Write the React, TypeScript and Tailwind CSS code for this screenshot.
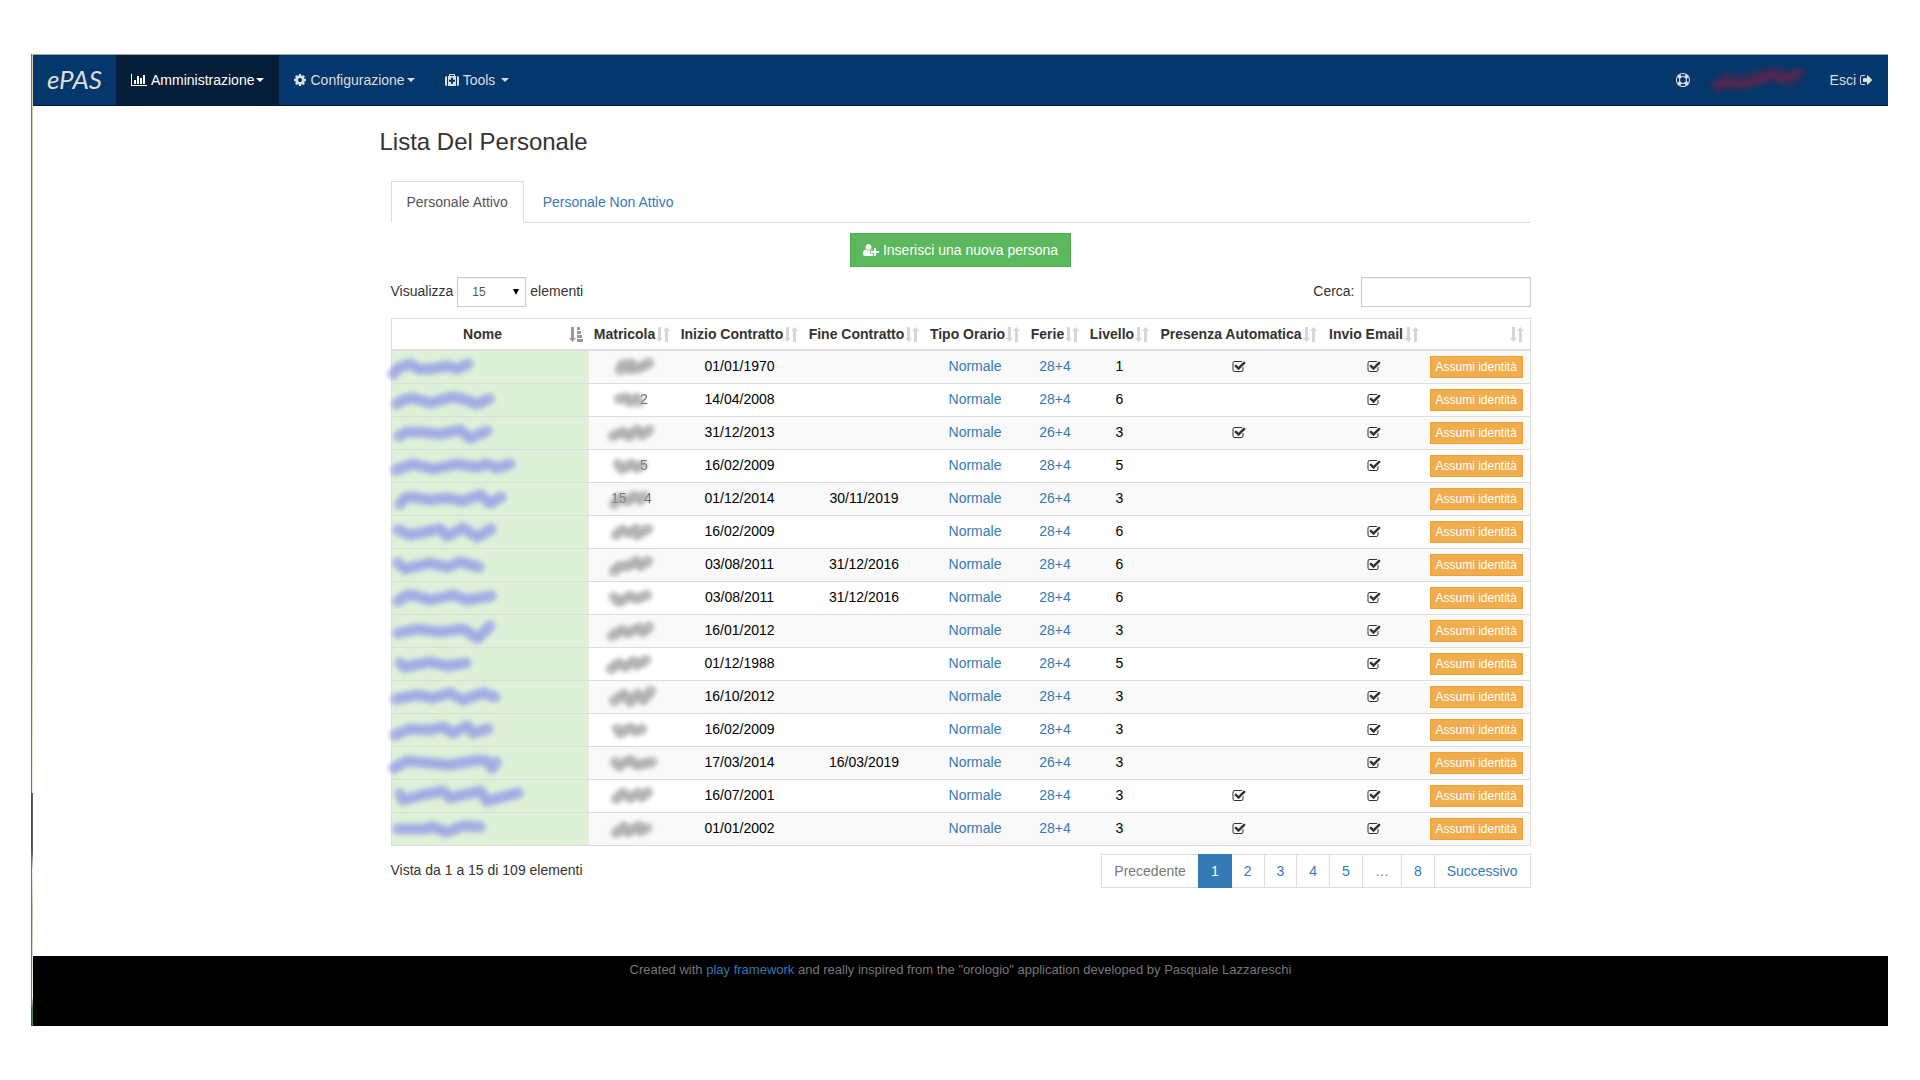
import { ReactNode, useState } from "react";

type Person = {
  id: number;
  nameSmudge: string;
  codeSmudge: string;
  code?: { x: number; text: string }[];
  start: string;
  end?: string;
  holidays: string;
  level: number;
  auto: boolean;
  email: boolean;
};

const people: Person[] = [
  {
    id: 1,
    nameSmudge: "-4,18 2,12 13,8 22,13 33,13 50,10 60,13 71,8",
    codeSmudge: "10,14 12,9 22,8 18,13 29,12 39,7",
    start: "01/01/1970",
    holidays: "28+4",
    level: 1,
    auto: true,
    email: true,
  },
  {
    id: 2,
    nameSmudge: "0,15 6,11 16,9 33,14 56,8 66,10 80,15 92,10",
    codeSmudge: "9,10 17,9 20,13 27,9 29,13",
    code: [{ x: 30, text: "2" }],
    start: "14/04/2008",
    holidays: "28+4",
    level: 6,
    auto: false,
    email: true,
  },
  {
    id: 3,
    nameSmudge: "2,14 10,10 23,10 43,12 63,8 73,16 90,9",
    codeSmudge: "3,14 13,10 19,14 27,8 32,13 39,8",
    start: "31/12/2013",
    holidays: "26+4",
    level: 3,
    auto: true,
    email: true,
  },
  {
    id: 4,
    nameSmudge: "-1,15 16,9 36,14 60,9 80,12 90,9 100,13 113,9",
    codeSmudge: "8,9 12,14 22,9 27,13 32,10",
    code: [{ x: 30, text: "5" }],
    start: "16/02/2009",
    holidays: "28+4",
    level: 5,
    auto: false,
    email: true,
  },
  {
    id: 5,
    nameSmudge: "3,16 8,10 16,9 33,12 50,10 66,13 83,7 93,15 104,9",
    codeSmudge: "4,16 9,10 18,13 24,8 30,12 34,8",
    code: [
      { x: 1, text: "15" },
      { x: 34, text: "4" },
    ],
    start: "01/12/2014",
    end: "30/11/2019",
    holidays: "26+4",
    level: 3,
    auto: false,
    email: false,
  },
  {
    id: 6,
    nameSmudge: "1,9 13,14 43,8 50,15 66,7 80,16 94,8",
    codeSmudge: "6,14 12,9 20,12 26,8 27,14 38,8",
    start: "16/02/2009",
    holidays: "28+4",
    level: 6,
    auto: false,
    email: true,
  },
  {
    id: 7,
    nameSmudge: "1,9 8,15 33,9 50,13 63,8 82,13",
    codeSmudge: "4,17 10,12 18,12 27,7 30,12 38,7",
    start: "03/08/2011",
    end: "31/12/2016",
    holidays: "28+4",
    level: 6,
    auto: false,
    email: true,
  },
  {
    id: 8,
    nameSmudge: "1,14 10,8 20,9 33,13 56,8 70,13 94,9",
    codeSmudge: "4,10 9,15 20,9 27,12 37,8",
    start: "03/08/2011",
    end: "31/12/2016",
    holidays: "28+4",
    level: 6,
    auto: false,
    email: true,
  },
  {
    id: 9,
    nameSmudge: "1,13 20,9 43,12 66,9 81,18 93,6",
    codeSmudge: "2,16 12,10 17,13 29,8 33,12 39,7",
    start: "16/01/2012",
    holidays: "28+4",
    level: 3,
    auto: false,
    email: true,
  },
  {
    id: 10,
    nameSmudge: "3,10 8,14 33,9 50,13 69,10",
    codeSmudge: "1,16 9,10 15,14 24,8 27,12 36,7",
    start: "01/12/1988",
    holidays: "28+4",
    level: 5,
    auto: false,
    email: true,
  },
  {
    id: 11,
    nameSmudge: "-1,13 20,9 36,12 53,7 66,14 86,7 98,11",
    codeSmudge: "4,15 14,8 20,16 28,8 33,14 41,5",
    start: "16/10/2012",
    holidays: "28+4",
    level: 3,
    auto: false,
    email: true,
  },
  {
    id: 12,
    nameSmudge: "-2,16 13,10 33,11 46,8 56,14 70,7 76,14 91,10",
    codeSmudge: "7,10 10,14 20,9 26,12 32,10",
    start: "16/02/2009",
    holidays: "28+4",
    level: 3,
    auto: false,
    email: true,
  },
  {
    id: 13,
    nameSmudge: "-3,16 10,9 33,11 53,13 80,8 90,9 95,16 99,10",
    codeSmudge: "5,10 9,14 20,8 27,13 42,10",
    start: "17/03/2014",
    end: "16/03/2019",
    holidays: "26+4",
    level: 3,
    auto: false,
    email: true,
  },
  {
    id: 14,
    nameSmudge: "3,9 6,15 30,9 46,6 53,13 83,6 90,16 121,8",
    codeSmudge: "6,14 13,8 20,13 28,8 32,12 38,7",
    start: "16/07/2001",
    holidays: "28+4",
    level: 3,
    auto: true,
    email: true,
  },
  {
    id: 15,
    nameSmudge: "1,11 26,11 36,9 50,14 66,8 83,9",
    codeSmudge: "6,15 14,9 18,14 29,8 30,13 37,10",
    start: "01/01/2002",
    holidays: "28+4",
    level: 3,
    auto: true,
    email: true,
  },
];

const columns = [
  { label: "Nome", width: "" },
  { label: "Matricola", width: "w-[87px]" },
  { label: "Inizio Contratto", width: "w-[128px]" },
  { label: "Fine Contratto", width: "w-[121px]" },
  { label: "Tipo Orario", width: "w-[101px]" },
  { label: "Ferie", width: "w-[59px]" },
  { label: "Livello", width: "w-[70px]" },
  { label: "Presenza Automatica", width: "w-[168px]" },
  { label: "Invio Email", width: "w-[102px]" },
  { label: "", width: "w-[105px]" },
];

const icons = {
  chart: {
    viewBox: "0 0 2048 1792",
    width: "w-4",
    path: "M640 896v512h-256v-512h256zm384-512v1024h-256v-1024h256zm1024 1152v128h-2048v-1536h128v1408h1920zm-640-896v768h-256v-768h256zm384-384v1152h-256v-1152h256z",
  },
  cog: {
    viewBox: "128 0 1536 1792",
    width: "w-3",
    path: "M1152 896q0-106-75-181t-181-75-181 75-75 181 75 181 181 75 181-75 75-181zm512-109v222q0 12-8 23t-20 13l-185 28q-19 54-39 91 35 50 107 138 10 12 10 25t-9 23q-27 37-99 108t-94 71q-12 0-26-9l-138-108q-44 23-91 38-16 136-29 186-7 28-36 28h-222q-14 0-24.5-8.5t-11.5-21.5l-28-184q-49-16-90-37l-141 107q-10 9-25 9-14 0-25-11-126-114-165-168-7-10-7-23 0-12 8-23 15-21 51-66.5t54-70.5q-27-50-41-99l-183-27q-13-2-21-12.5t-8-23.5v-222q0-12 8-23t19-13l186-28q14-46 39-92-40-57-107-138-10-12-10-24 0-10 9-23 26-36 98.5-107.5t94.5-71.5q13 0 26 10l138 107q44-23 91-38 16-136 29-186 7-28 36-28h222q14 0 24.5 8.5t11.5 21.5l28 184q49 16 90 37l142-107q9-9 24-9 13 0 25 10 129 119 165 170 7 8 7 22 0 12-8 23-15 21-51 66.5t-54 70.5q26 50 41 98l183 28q13 2 21 12.5t8 23.5z",
  },
  medkit: {
    viewBox: "0 0 1792 1792",
    width: "w-3.5",
    path: "M1280 1088v-192q0-14-9-23t-23-9h-224v-224q0-14-9-23t-23-9h-192q-14 0-23 9t-9 23v224h-224q-14 0-23 9t-9 23v192q0 14 9 23t23 9h224v224q0 14 9 23t23 9h192q14 0 23-9t9-23v-224h224q14 0 23-9t9-23zm-640-704h512v-128h-512v128zm-384 0v1280h-32q-92 0-158-66t-66-158v-832q0-92 66-158t158-66h32zm1152 0v1280h-1024v-1280h128v-160q0-40 28-68t68-28h576q40 0 68 28t28 68v160h128zm384 224v832q0 92-66 158t-158 66h-32v-1280h32q92 0 158 66t66 158z",
  },
  ring: {
    viewBox: "0 0 1792 1792",
    width: "w-3.5",
    path: "M896 0q182 0 348 71t286 191 191 286 71 348-71 348-191 286-286 191-348 71-348-71-286-191-191-286-71-348 71-348 191-286 286-191 348-71zm0 128q-190 0-361 90l194 194q82-28 167-28t167 28l194-194q-171-90-361-90zm-678 1129l194-194q-28-82-28-167t28-167l-194-194q-90 171-90 361t90 361zm678 407q190 0 361-90l-194-194q-82 28-167 28t-167-28l-194 194q171 90 361 90zm0-384q159 0 271.5-112.5t112.5-271.5-112.5-271.5-271.5-112.5-271.5 112.5-112.5 271.5 112.5 271.5 271.5 112.5zm484-217l194 194q90-171 90-361t-90-361l-194 194q28 82 28 167t-28 167z",
  },
  signOut: {
    viewBox: "64 0 1664 1792",
    width: "w-[13px]",
    path: "M704 1440q0 4 1 20t.5 26.5-3 23.5-10 19.5-20.5 6.5h-320q-119 0-203.5-84.5t-84.5-203.5v-704q0-119 84.5-203.5t203.5-84.5h320q13 0 22.5 9.5t9.5 22.5q0 4 1 20t.5 26.5-3 23.5-10 19.5-20.5 6.5h-320q-66 0-113 47t-47 113v704q0 66 47 113t113 47h312l11.5 1 11.5 3 8 5.5 7 9 2 13.5zm928-544q0 26-19 45l-544 544q-19 19-45 19t-45-19-19-45v-288h-448q-26 0-45-19t-19-45v-384q0-26 19-45t45-19h448v-288q0-26 19-45t45-19 45 19l544 544q19 19 19 45z",
  },
  userPlus: {
    viewBox: "0 0 2048 1792",
    width: "w-4",
    path: "M704 896q-159 0-271.5-112.5t-112.5-271.5 112.5-271.5 271.5-112.5 271.5 112.5 112.5 271.5-112.5 271.5-271.5 112.5zm960 128h352q13 0 22.5 9.5t9.5 22.5v192q0 13-9.5 22.5t-22.5 9.5h-352v352q0 13-9.5 22.5t-22.5 9.5h-192q-13 0-22.5-9.5t-9.5-22.5v-352h-352q-13 0-22.5-9.5t-9.5-22.5v-192q0-13 9.5-22.5t22.5-9.5h352v-352q0-13 9.5-22.5t22.5-9.5h192q13 0 22.5 9.5t9.5 22.5v352zm-736 224q0 52 38 90t90 38h256v238q-68 50-171 50h-874q-121 0-194-69t-73-190q0-53 3.5-103.5t14-109 26.5-108.5 43-97.5 62-81 85.5-53.5 111.5-20q19 0 39 17 79 61 154.5 91.5t164.5 30.5 164.5-30.5 154.5-91.5q20-17 39-17 132 0 217 96h-223q-52 0-90 38t-38 90v192z",
  },
  check: {
    viewBox: "128 0 1664 1792",
    width: "w-[13px]",
    path: "M1472 930v318q0 119-84.5 203.5t-203.5 84.5h-832q-119 0-203.5-84.5t-84.5-203.5v-832q0-119 84.5-203.5t203.5-84.5h832q63 0 117 25 15 7 18 23 3 17-9 29l-49 49q-10 10-23 10-3 0-9-2-23-6-45-6h-832q-66 0-113 47t-47 113v832q0 66 47 113t113 47h832q66 0 113-47t47-113v-254q0-13 9-22l64-64q10-10 23-10 6 0 12 3 20 8 20 29zm231-489l-814 814q-24 24-57 24t-57-24l-430-430q-24-24-24-57t24-57l110-110q24-24 57-24t57 24l263 263 647-647q24-24 57-24t57 24l110 110q24 24 24 57t-24 57z",
  },
};

const Icon = ({ name }: { name: keyof typeof icons }) => (
  <svg
    viewBox={icons[name].viewBox}
    className={`h-3.5 shrink-0 overflow-visible ${icons[name].width}`}
    fill="currentColor"
    aria-hidden="true"
  >
    <path d={icons[name].path} />
  </svg>
);

const Caret = () => (
  <span className="h-0 w-0 border-x-4 border-t-4 border-x-transparent border-t-current" />
);

const SortIcon = ({ sorted }: { sorted?: boolean }) => (
  <svg
    viewBox="0 0 14 15"
    className={
      sorted
        ? "absolute right-[6px] bottom-[7px] h-[15px] w-3.5 text-[#999]"
        : "absolute right-[6px] bottom-[7px] h-[15px] w-3.5 text-[#d6d6d6]"
    }
    fill="currentColor"
    aria-hidden="true"
  >
    <path d="M2 0h3v11h2L3.500 15 0 11h2z" />
    {sorted ? (
      <path d="M8 0h3v3H8zM8 4h4v3H8zM8 8h5v3H8zM8 12h6v3H8z" />
    ) : (
      <path d="M9 15h3V4h2L10.500 0 7 4h2z" />
    )}
  </svg>
);

const Smudge = ({ points, gray }: { points: string; gray?: boolean }) => (
  <>
    <polyline
      points={points}
      fill="none"
      stroke={gray ? "#9a9a9a" : "#8f97ea"}
      strokeWidth={gray ? 11 : 12}
      strokeLinecap="round"
      strokeLinejoin="round"
      opacity="0.6"
      className="blur-[2px]"
    />
    <polyline
      points={points}
      fill="none"
      stroke={gray ? "#888888" : "#7a82e8"}
      strokeWidth="5"
      strokeLinejoin="round"
      opacity="0.3"
      className="blur-[2px]"
    />
  </>
);

const NavItem = ({
  children,
  active,
}: {
  children: ReactNode;
  active?: boolean;
}) => (
  <button
    type="button"
    className={
      active
        ? "flex h-full items-center gap-0.5 bg-[#041e3a] px-[15px] text-white"
        : "flex h-full items-center gap-0.5 px-[15px]"
    }
  >
    {children}
  </button>
);

const Navbar = () => (
  <nav className="flex h-[51px] items-center border-b border-[#041e3a] bg-[#04376b] text-sm text-[#ddd]">
    <a
      href="#"
      className="flex h-full w-[83px] items-center justify-center font-[Lato,sans-serif] text-[26px] italic"
    >
      ePAS
    </a>
    <NavItem active>
      <Icon name="chart" />
      <span className="pl-0.5">Amministrazione</span>
      <Caret />
    </NavItem>
    <NavItem>
      <Icon name="cog" />
      <span className="pl-0.5">Configurazione</span>
      <Caret />
    </NavItem>
    <NavItem>
      <Icon name="medkit" />
      <span className="pr-1 pl-0.5">Tools</span>
      <Caret />
    </NavItem>
    <div className="ml-auto flex h-full items-center">
      <a href="#" aria-label="Aiuto" className="px-[15px]">
        <Icon name="ring" />
      </a>
      <svg viewBox="0 0 110 50" className="h-[50px] w-[110px]" aria-hidden="true">
        <g fill="none" stroke="#8c1d3c" strokeLinecap="round" strokeLinejoin="round">
          <polyline
            points="14,30 22,24 34,29 48,24 62,21 70,18 80,24 90,21"
            strokeWidth="14"
            opacity="0.4"
            className="blur-[3px]"
          />
          <polyline
            points="10,30 20,28 34,29 54,25 66,19 78,24 98,16"
            strokeWidth="5"
            opacity="0.4"
            className="blur-[2px]"
          />
        </g>
      </svg>
      <a href="#" className="flex items-center gap-1 px-[15px]">
        Esci
        <Icon name="signOut" />
      </a>
    </div>
  </nav>
);

const PersonTable = () => (
  <table className="w-full table-fixed border-separate border-spacing-0 border border-b-0 border-[#ddd] text-center">
    <colgroup>
      {columns.map((column) => (
        <col key={column.label} className={column.width} />
      ))}
    </colgroup>
    <thead>
      <tr>
        {columns.map((column, index) => (
          <th
            key={column.label}
            scope="col"
            aria-label={column.label || "Azioni"}
            className="relative h-8 border-b-2 border-[#ddd] pr-5 pl-[5px] font-bold whitespace-nowrap"
          >
            {column.label}
            <SortIcon sorted={index === 0} />
          </th>
        ))}
      </tr>
    </thead>
    <tbody className="text-black [&_td]:border-b [&_td]:border-[#ddd] [&_td]:p-[5px] [&_td]:align-top">
      {people.map((person) => (
        <tr key={person.id} className="odd:bg-[#f9f9f9]">
          <td className="bg-[#dff0d8]">
            <svg className="block h-5 w-32 overflow-visible" aria-hidden="true">
              <Smudge points={person.nameSmudge} />
            </svg>
          </td>
          <td>
            <svg
              className="mx-auto block h-5 w-11 overflow-visible"
              aria-hidden="true"
            >
              {person.code?.map((part) => (
                <text key={part.x} x={part.x} y="15" opacity="0.6">
                  {part.text}
                </text>
              ))}
              <Smudge points={person.codeSmudge} gray />
            </svg>
          </td>
          <td>{person.start}</td>
          <td>{person.end}</td>
          <td>
            <a href="#" className="text-[#337ab7]">
              Normale
            </a>
          </td>
          <td>
            <a href="#" className="text-[#337ab7]">
              {person.holidays}
            </a>
          </td>
          <td>{person.level}</td>
          <td>
            <span className="flex h-[22px] items-center justify-center pl-0.5 text-[#333]">
              {person.auto && <Icon name="check" />}
            </span>
          </td>
          <td>
            <span className="flex h-[22px] items-center justify-center pl-0.5 text-[#333]">
              {person.email && <Icon name="check" />}
            </span>
          </td>
          <td>
            <button
              type="button"
              className="block h-[22px] border border-[#eea236] bg-[#f0ad4e] px-[5px] text-xs whitespace-nowrap text-white"
            >
              Assumi identità
            </button>
          </td>
        </tr>
      ))}
    </tbody>
  </table>
);

const Pagination = () => {
  const [page, setPage] = useState("1");
  const items = ["Precedente", "1", "2", "3", "4", "5", "…", "8", "Successivo"];

  return (
    <div className="flex">
      {items.map((item) => (
        <button
          key={item}
          type="button"
          disabled={item === "Precedente" || item === "…"}
          onClick={() => item !== "Successivo" && setPage(item)}
          className={
            item === page
              ? "z-10 -ml-px h-[34px] border border-[#337ab7] bg-[#337ab7] px-3 text-white first:ml-0"
              : "-ml-px h-[34px] border border-[#ddd] px-3 text-[#337ab7] first:ml-0 disabled:text-[#777]"
          }
        >
          {item}
        </button>
      ))}
    </div>
  );
};

export default function App() {
  const [size, setSize] = useState("15");
  const [search, setSearch] = useState("");

  return (
    <div className="bg-white pt-[54px] pr-8 pb-[54px] pl-[31px] font-['Liberation_Sans',Arial,sans-serif] text-sm leading-5 text-[#333]">
      <div className="flex">
        {/* strip of the desktop behind the window */}
        <div className="w-px bg-[linear-gradient(#7a7265_76%,#55524e_76%,#55524e_82%,#7a7265_83%,#7a7265_98%,#35584f_98%)]" />
        <div className="w-px bg-[linear-gradient(#d3ceb4_60%,#eeecdf_76%,#55605f_76%,#55605f_82%,#f4f2e6_84%,#b9c2ae_88%,#f4f2e6_97%,#3f8577_98%)]" />
        <div className="min-w-0 flex-1 border-t border-[#a3a79b]">
          <Navbar />
          <main className="mx-auto max-w-[1170px] px-[15px] pt-5 pb-[68px]">
            <h1 className="-ml-[11px] text-2xl leading-8">Lista Del Personale</h1>
            <div className="mt-[23px] flex gap-[3px] border-b border-[#ddd]">
              <button
                type="button"
                className="-mb-px border border-[#ddd] border-b-white bg-white px-[15px] py-2.5 text-[#555]"
              >
                Personale Attivo
              </button>
              <button type="button" className="px-4 py-2.5 text-[#337ab7]">
                Personale Non Attivo
              </button>
            </div>
            <div className="mt-2.5 flex justify-center">
              <button
                type="button"
                className="flex h-[34px] items-center gap-1 border border-[#4cae4c] bg-[#5cb85c] px-3 text-white"
              >
                <Icon name="userPlus" />
                Inserisci una nuova persona
              </button>
            </div>
            <div className="mt-2.5 mb-[11px] flex items-center justify-between leading-7">
              <label className="flex items-start gap-1">
                Visualizza
                <span className="relative flex items-center">
                  <select
                    value={size}
                    onChange={(e) => setSize(e.target.value)}
                    className="h-[30px] w-[69px] appearance-none border border-[#ccc] bg-white px-3.5 text-xs text-[#555] inset-shadow-xs"
                  >
                    <option>15</option>
                    <option>25</option>
                    <option>50</option>
                  </select>
                  <span className="pointer-events-none absolute right-[7px] border-x-3 border-t-6 border-x-transparent border-t-black" />
                </span>
                elementi
              </label>
              <label className="flex items-start gap-1.5">
                Cerca:
                <input
                  type="search"
                  value={search}
                  onChange={(e) => setSearch(e.target.value)}
                  className="h-[30px] w-[170px] border border-[#ccc] px-2.5 text-xs inset-shadow-xs"
                />
              </label>
            </div>
            <PersonTable />
            <div className="mt-2 flex justify-between">
              <p className="pt-1.5">Vista da 1 a 15 di 109 elementi</p>
              <Pagination />
            </div>
          </main>
          <footer className="h-[70px] bg-black pt-1 text-center text-[13px] text-[#777]">
            Created with{" "}
            <a href="#" className="text-[#337ab7]">
              play framework
            </a>{" "}
            and really inspired from the "orologio" application developed by
            Pasquale Lazzareschi
          </footer>
        </div>
      </div>
    </div>
  );
}
